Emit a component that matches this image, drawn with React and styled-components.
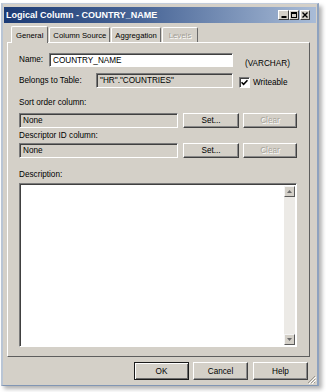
import React from "react";
import styled, { createGlobalStyle, css } from "styled-components";

const GlobalStyle = createGlobalStyle`
  html, body { margin: 0; padding: 0; background: #ffffff; }
  body { font-family: "Liberation Sans", Arial, sans-serif; }
  * { box-sizing: border-box; }
`;

const FACE = "#d4d0c8";

const Screen = styled.div`
  width: 326px;
  height: 392px;
  padding: 3px 0 0 1px;
  background: #ffffff;
`;

const Window = styled.div`
  position: relative;
  width: 318px;
  height: 383px;
  background: ${FACE};
  border: 1px solid #8196b4;
  border-right: 2px solid #8ea2bf;
  border-left: 2px solid #b9c5d5;
  border-top: 1px solid #c3cddb;
  padding: 3px 1px 0 1px;
  box-shadow: 3px 3px 4px rgba(0, 0, 0, 0.3);
  display: flex;
  flex-direction: column;
  font-size: 8.2px;
  color: #000;
`;

const TitleBar = styled.div`
  height: 16px;
  display: flex;
  align-items: center;
  padding: 0 6px 0 2px;
  background: linear-gradient(to right, #1c3b75 0%, #4a6798 45%, #a9bcd7 100%);
`;

const Title = styled.div`
  flex: 1;
  color: #ffffff;
  font-weight: bold;
  font-size: 9px;
`;

const CaptionGroup = styled.div`
  display: flex;
  align-items: center;
`;

const CaptionButton = styled.div`
  width: ${(p) => p.$w || 10}px;
  height: 10px;
  background: ${FACE};
  border: 1px solid;
  border-color: #ffffff #404040 #404040 #ffffff;
  display: flex;
  align-items: center;
  justify-content: center;
  margin-left: ${(p) => (p.$gap ? "1px" : "0")};
`;

const TabStrip = styled.div`
  position: relative;
  z-index: 1;
  height: 16px;
  margin-top: 3px;
  padding-left: 7px;
  display: flex;
  align-items: flex-end;
  font-size: 7.7px;
`;

const Tab = styled.div`
  height: ${(p) => (p.$active ? "17px" : "15px")};
  padding: 0 ${(p) => (p.$active ? "4px" : "3px")};
  margin-bottom: ${(p) => (p.$active ? "-1px" : "0")};
  margin-left: ${(p) => (p.$active ? "0" : "1px")};
  background: ${FACE};
  border: 1px solid;
  border-bottom: none;
  border-color: #ffffff #6a6a6a #6a6a6a #ffffff;
  border-radius: 2px 2px 0 0;
  display: flex;
  align-items: center;
  padding-top: ${(p) => (p.$active ? "0" : "1px")};
  color: ${(p) => (p.$disabled ? "#a19d94" : "#000")};
  text-shadow: ${(p) => (p.$disabled ? "1px 1px 0 #ffffff" : "none")};
  ${(p) =>
    p.$disabled &&
    css`
      padding: 1px 6px 0 6px;
    `}
`;

const Panel = styled.div`
  position: relative;
  z-index: 0;
  margin-left: 3px;
  width: 303px;
  height: 315px;
  border: 1px solid;
  border-color: #ffffff #5e5e5e #5e5e5e #ffffff;
  padding: 10px 0 0 11px;
  display: flex;
  flex-direction: column;
`;

const Row = styled.div`
  display: flex;
  align-items: center;
  margin-top: ${(p) => p.$mt || 0}px;
`;

const Label = styled.div`
  width: ${(p) => (p.$w ? p.$w + "px" : "auto")};
  flex: none;
  white-space: nowrap;
  margin-top: ${(p) => p.$mt || 0}px;
  line-height: 10px;
`;

const Field = styled.div`
  width: ${(p) => p.$w}px;
  height: ${(p) => p.$h || 15}px;
  flex: none;
  background: ${(p) => (p.$white ? "#ffffff" : FACE)};
  border: 1px solid;
  border-color: #7a7a7a #ffffff #ffffff #7a7a7a;
  box-shadow: inset 1px 1px 0 #404040;
  padding: 0 3px;
  display: flex;
  align-items: center;
  white-space: nowrap;
`;

const SideNote = styled.div`
  align-self: flex-end;
  margin-left: 12px;
  line-height: 10px;
  margin-bottom: -2px;
  white-space: nowrap;
`;

const CheckWrap = styled.div`
  align-self: flex-end;
  display: flex;
  align-items: center;
  margin-left: 6px;
`;

const CheckBox = styled.div`
  width: 11px;
  height: 11px;
  background: #ffffff;
  border: 1px solid;
  border-color: #7a7a7a #ffffff #ffffff #7a7a7a;
  box-shadow: inset 1px 1px 0 #404040;
  display: flex;
  align-items: center;
  justify-content: center;
  margin-right: 3px;
`;

const Button = styled.div`
  width: ${(p) => p.$w || 55}px;
  height: ${(p) => p.$h || 15}px;
  flex: none;
  margin-left: ${(p) => p.$ml || 0}px;
  background: ${FACE};
  border: 1px solid;
  border-color: #ffffff #404040 #404040 #ffffff;
  box-shadow: inset -1px -1px 0 #8a8a8a;
  display: flex;
  align-items: center;
  justify-content: center;
  color: ${(p) => (p.$disabled ? "#a8a49b" : "#000")};
  text-shadow: ${(p) => (p.$disabled ? "1px 1px 0 #ffffff" : "none")};
  ${(p) =>
    p.$default &&
    css`
      border: 1px solid #1a1a1a;
      box-shadow: inset 1px 1px 0 #ffffff, inset -1px -1px 0 #6a6a6a;
    `}
`;

const TextArea = styled.div`
  margin-top: 3px;
  width: 278px;
  height: 164px;
  background: #ffffff;
  border: 1px solid;
  border-color: #7a7a7a #ffffff #ffffff #7a7a7a;
  box-shadow: inset 1px 1px 0 #404040;
  display: flex;
  justify-content: flex-end;
  padding: 2px 1px 1px 2px;
`;

const ScrollBar = styled.div`
  width: 11px;
  height: 100%;
  background: #eceae6;
  display: flex;
  flex-direction: column;
  justify-content: space-between;
`;

const ScrollButton = styled.div`
  width: 11px;
  height: 11px;
  background: ${FACE};
  border: 1px solid;
  border-color: #f4f4f4 #5a5a5a #5a5a5a #f4f4f4;
  display: flex;
  align-items: center;
  justify-content: center;
`;

const ButtonRow = styled.div`
  display: flex;
  justify-content: flex-end;
  margin-top: 5px;
  padding-right: 8px;
`;

const Grip = styled.svg`
  position: absolute;
  right: 1px;
  bottom: 1px;
`;

function Arrow({ up }) {
  return (
    <svg width="5" height="3" viewBox="0 0 5 3">
      <path d={up ? "M2.5 0 L5 3 L0 3 Z" : "M0 0 L5 0 L2.5 3 Z"} fill="#6a6a6a" />
    </svg>
  );
}

export default function App() {
  return (
    <>
      <GlobalStyle />
      <Screen>
        <Window>
          <TitleBar>
            <Title>Logical Column - COUNTRY_NAME</Title>
            <CaptionGroup>
              <CaptionButton $w={11}>
                <svg width="6" height="6" viewBox="0 0 6 6">
                  <rect x="0.5" y="4" width="5" height="2" fill="#000" />
                </svg>
              </CaptionButton>
              <CaptionButton>
                <svg width="6" height="6" viewBox="0 0 6 6">
                  <rect x="0.5" y="0.5" width="5" height="5" fill="none" stroke="#000" />
                  <rect x="0" y="0" width="6" height="2" fill="#000" />
                </svg>
              </CaptionButton>
              <CaptionButton $gap>
                <svg width="6" height="6" viewBox="0 0 6 6">
                  <path d="M0.5 0.5 L5.5 5.5 M5.5 0.5 L0.5 5.5" stroke="#000" strokeWidth="1.4" />
                </svg>
              </CaptionButton>
            </CaptionGroup>
          </TitleBar>

          <TabStrip>
            <Tab $active>General</Tab>
            <Tab>Column Source</Tab>
            <Tab>Aggregation</Tab>
            <Tab $disabled>Levels</Tab>
          </TabStrip>

          <Panel>
            <Row>
              <Label $w={30}>Name:</Label>
              <Field $w={184} $h={14} $white>COUNTRY_NAME</Field>
              <SideNote>(VARCHAR)</SideNote>
            </Row>
            <Row $mt={6}>
              <Label $w={77}>Belongs to Table:</Label>
              <Field $w={137}>"HR"."COUNTRIES"</Field>
              <CheckWrap>
                <CheckBox>
                  <svg width="7" height="7" viewBox="0 0 7 7">
                    <path d="M0.5 3.2 L2.6 5.3 L6.5 1.2" fill="none" stroke="#000" strokeWidth="1.6" />
                  </svg>
                </CheckBox>
                Writeable
              </CheckWrap>
            </Row>

            <Label $mt={10}>Sort order column:</Label>
            <Row $mt={5}>
              <Field $w={159}>None</Field>
              <Button $w={56} $ml={5}>Set...</Button>
              <Button $w={54} $ml={4} $disabled>Clear</Button>
            </Row>

            <Label $mt={3}>Descriptor ID column:</Label>
            <Row $mt={2}>
              <Field $w={159}>None</Field>
              <Button $w={56} $ml={5}>Set...</Button>
              <Button $w={54} $ml={4} $disabled>Clear</Button>
            </Row>

            <Label $mt={12}>Description:</Label>
            <TextArea>
              <ScrollBar>
                <ScrollButton>
                  <Arrow up />
                </ScrollButton>
                <ScrollButton>
                  <Arrow />
                </ScrollButton>
              </ScrollBar>
            </TextArea>
          </Panel>

          <ButtonRow>
            <Button $w={55} $h={18} $default>OK</Button>
            <Button $w={55} $h={18} $ml={4}>Cancel</Button>
            <Button $w={55} $h={18} $ml={5}>Help</Button>
          </ButtonRow>

          <Grip width="10" height="10" viewBox="0 0 10 10">
            <path d="M9 2 L2 9 M9 5 L5 9 M9 8 L8 9" stroke="#9a978f" strokeWidth="1" />
            <path d="M10 3 L3 10 M10 6 L6 10" stroke="#ffffff" strokeWidth="1" />
          </Grip>
        </Window>
      </Screen>
    </>
  );
}
